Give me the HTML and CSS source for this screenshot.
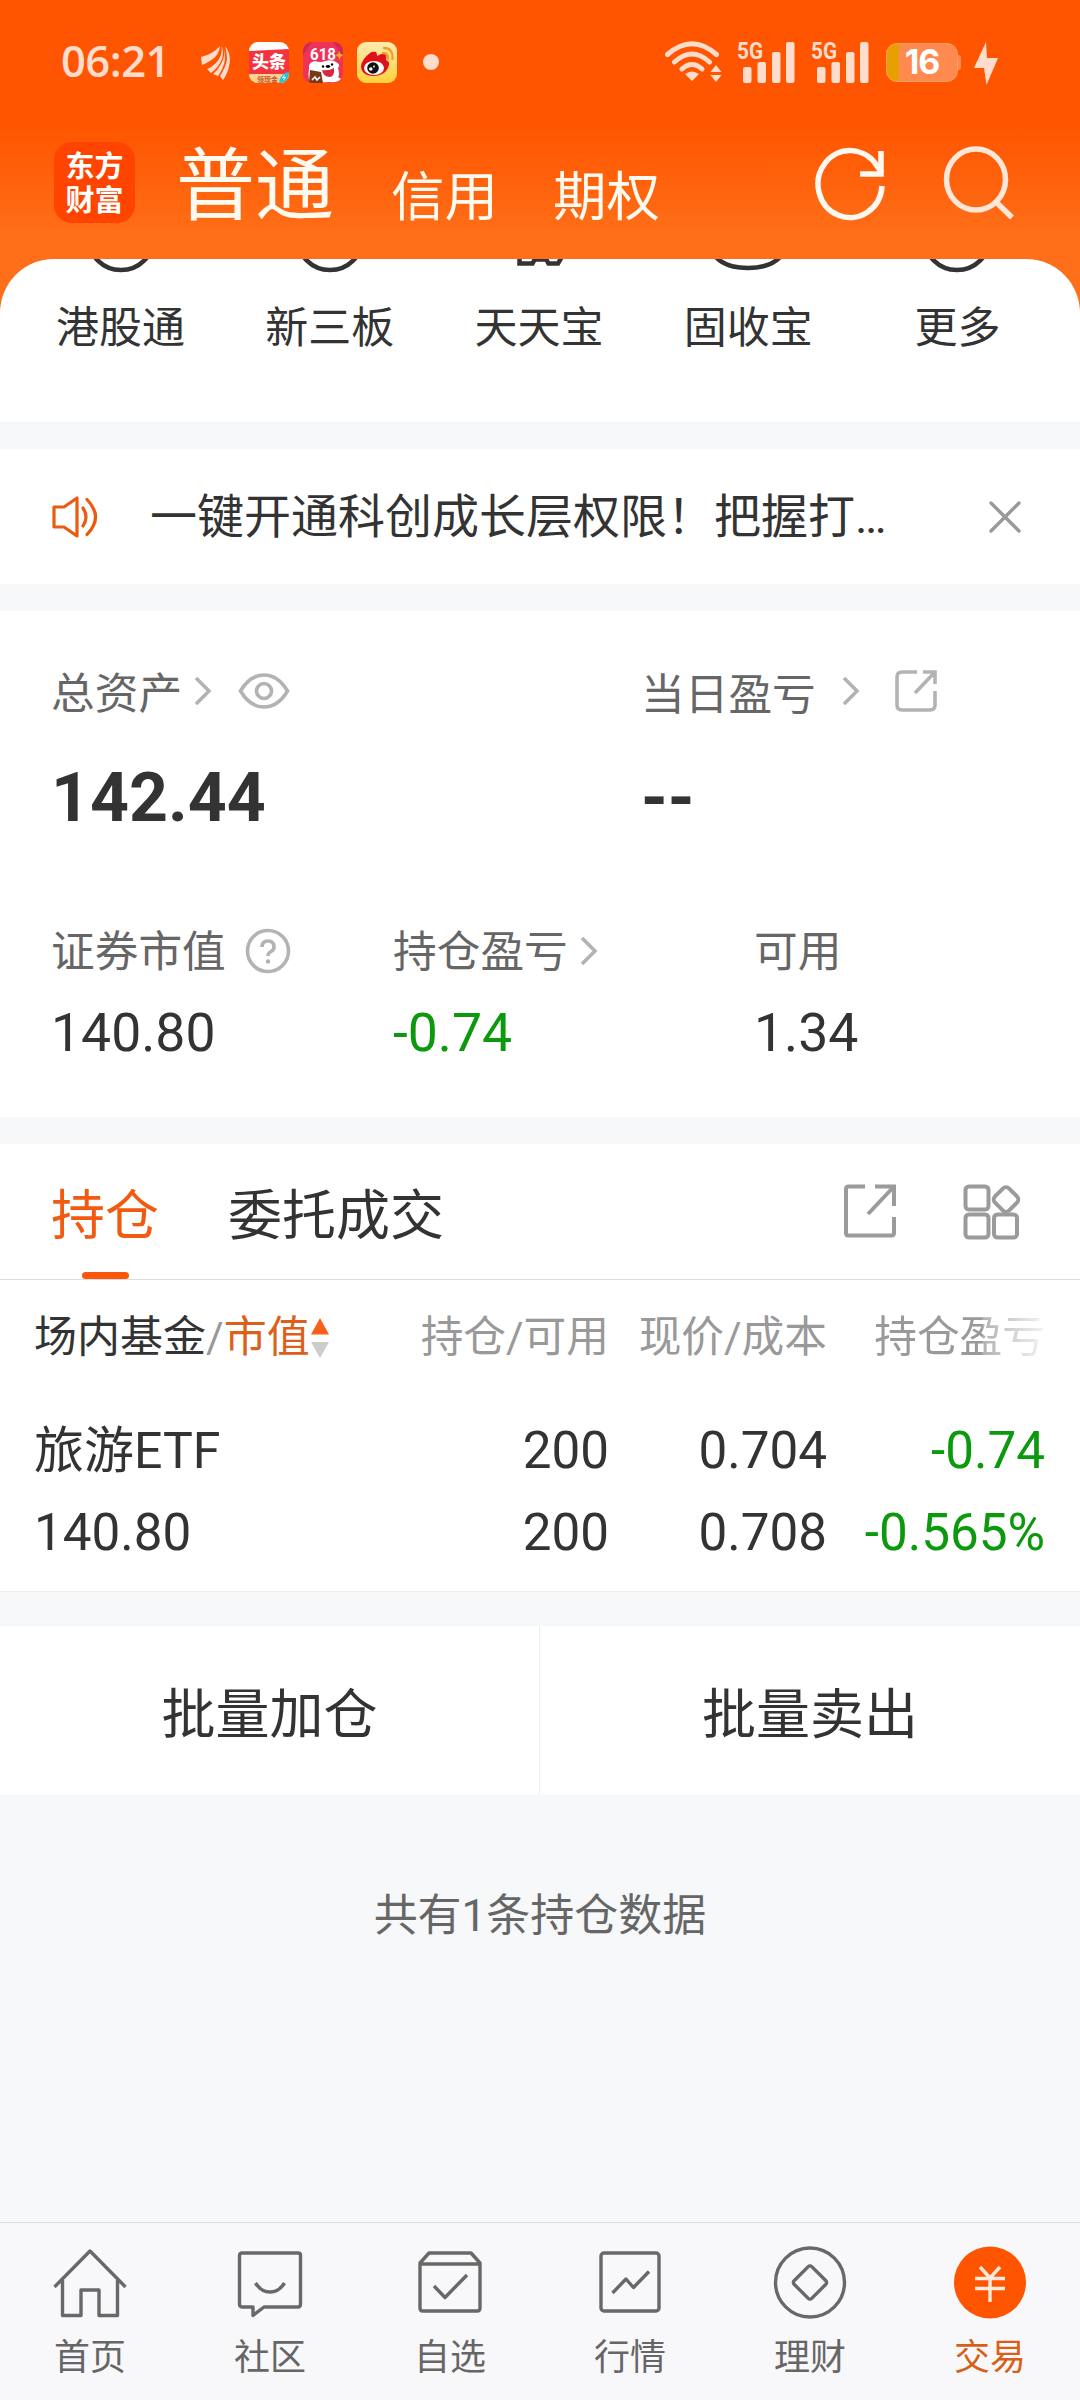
FILE: index.html
```html
<!DOCTYPE html>
<html lang="zh-CN">
<head>
<meta charset="utf-8">
<title>东方财富 交易</title>
<link rel="stylesheet" href="styles.css">
</head>
<body>
<header class="top">
  <div class="status">
    <div class="status-left">
      <span class="clock">06:21</span>
      <svg class="leaf" width="30" height="36" viewBox="0 0 30 36" fill="#ffdccb"><path d="M0 12Q12 9 19 1Q18 11 9 16Q4 19 1 20Z"/><path d="M20.500 1Q22 11 15 18Q11 22 6 24L10 28Q18 22 21 14Q23 7 20.500 1Z"/><path d="M22 1Q25 11 20 19Q17 25 12 29L17 31Q23 23 24 14Q24 7 22 1Z"/><path d="M24 1Q31 10 28 21Q27 28 22 35L19 31Q25 22 26 14Q26 7 24 1Z"/></svg>
      <svg class="app" width="40" height="41" viewBox="0 0 40 41"><defs><clipPath id="c1"><rect width="40" height="41" rx="9"/></clipPath></defs><g clip-path="url(#c1)"><rect width="40" height="41" fill="#fff"/><path d="M0 9L40 7V33H0Z" fill="#f5333f"/><rect y="32" width="40" height="9" fill="#ffd292"/><path d="M30 41Q31 31 40 30V41Z" fill="#22c4d6"/><path d="M36 32L33 36h2l-1 3 3-4h-2z" fill="#fff"/></g><text x="20" y="26" text-anchor="middle" class="t-news">头条</text><text x="18.500" y="39.500" text-anchor="middle" class="t-cash">领现金</text></svg>
      <svg class="app" width="40" height="41" viewBox="0 0 40 41"><defs><clipPath id="c2"><rect width="40" height="41" rx="9"/></clipPath></defs><g clip-path="url(#c2)"><rect width="40" height="41" fill="#ee3358"/><path d="M0 13L9 0H0ZM30 0h10v14z" fill="#cf2859"/><path d="M36 9l1.500 3 3 1-3 2-1 3-1-3-3-2 3-1z" fill="#ffb21e"/><path d="M6 27Q5 20 12 19Q18 21 22 19Q29 17 33 20Q38 22 35 26Q37 33 35 35L38 37Q34 41 27 40L9 41Q4 38 6 27Z" fill="#fff"/><path d="M19 28Q26 29 31 26Q32 35 26 35Q20 34 19 28Z" fill="#d8283f"/><circle cx="20" cy="24.500" r="1.200"/><circle cx="29" cy="22.500" r="1.200"/><ellipse cx="25" cy="24.500" rx="2.200" ry="1.400"/><path d="M7 28L18 30L20 41H6Z" fill="#7a3a18"/><path d="M9 38l3-3 2 3 3-3" stroke="#fff" stroke-width="1.500" fill="none"/></g><text x="20" y="18" text-anchor="middle" textLength="26" lengthAdjust="spacingAndGlyphs" class="t-sale">618</text></svg>
      <svg class="app" width="40" height="41" viewBox="0 0 40 41"><defs><linearGradient id="wb" x1="0" y1="0" x2="0" y2="1"><stop offset="0" stop-color="#ffeab0"/><stop offset="1" stop-color="#ffd23c"/></linearGradient></defs><rect width="40" height="41" rx="9" fill="url(#wb)"/><path d="M17 10Q20 9 20 14Q27 10 29 13Q30 15 29 18Q34 20 31 26Q27 34 16 34Q4 33 4 24Q5 17 13 11Q16 9 17 10Z" fill="#e0101a"/><ellipse cx="17" cy="26" rx="10" ry="7" fill="#fff"/><circle cx="16" cy="26" r="5.800" fill="#111"/><circle cx="13.800" cy="27" r="1.800" fill="#fff"/><circle cx="17" cy="24.500" r=".9" fill="#fff"/><path d="M27 6Q36 6 35.500 17M26 11Q32 11 31 17" stroke="#efa024" stroke-width="2.300" fill="none" stroke-linecap="round"/></svg>
      <span class="more-dot"></span>
    </div>
    <div class="status-right">
      <svg class="wifi" width="58" height="42" viewBox="0 0 58 42" fill="none" stroke="#ffdccb" stroke-width="5" stroke-linecap="round"><path d="M3.500 13.500Q28 -8 52.500 13.500M10.500 21Q28 5 45.500 21M18 28Q28 19 38 28"/><path d="M21 33Q28 28 35 33L28 40Z" fill="#ffdccb" stroke="none"/><path d="M46.500 31L52 24L57.500 31ZM46.500 34H57.500L52 41Z" fill="#ffdccb" stroke="none"/></svg>
      <svg class="signal" width="58" height="42" viewBox="0 0 58 42" fill="#ffdccb"><text x="0" y="18" class="t-5g" textLength="26" lengthAdjust="spacingAndGlyphs">5G</text><rect x="6" y="26" width="8.500" height="16" rx="2"/><rect x="20.500" y="21" width="8.500" height="21" rx="2"/><rect x="35" y="11" width="8.500" height="31" rx="2"/><rect x="49" y="1" width="8.500" height="41" rx="2"/></svg>
      <svg class="signal second" width="58" height="42" viewBox="0 0 58 42" fill="#ffdccb"><text x="0" y="18" class="t-5g" textLength="26" lengthAdjust="spacingAndGlyphs">5G</text><rect x="6" y="26" width="8.500" height="16" rx="2"/><rect x="20.500" y="21" width="8.500" height="21" rx="2"/><rect x="35" y="11" width="8.500" height="31" rx="2"/><rect x="49" y="1" width="8.500" height="41" rx="2"/></svg>
      <div class="battery"><span>16</span></div><i class="nub"></i>
      <svg class="bolt" width="24" height="43" viewBox="0 0 24 43" fill="#ffdccb"><path d="M12 0L0 26H10L12.500 43L24 16H13Z"/></svg>
    </div>
  </div>
  <div class="titlebar">
    <div class="logo"><span>东方</span><span>财富</span></div>
    <nav class="modes"><b>普通</b><span>信用</span><span>期权</span></nav>
    <svg class="refresh" width="74" height="76" viewBox="0 0 74 76" fill="none" stroke="#fff8f0" stroke-width="5.500"><path d="M68 41A32 33.500 0 1 1 63 21L68 28"/><path d="M67 6V29H46"/></svg>
    <svg class="search" width="72" height="76" viewBox="0 0 72 76" fill="none" stroke="#ffe6d6" stroke-width="5.500"><ellipse cx="34" cy="34.500" rx="29.500" ry="30.500"/><path d="M54 57L70 72.500"/></svg>
  </div>
</header>
<section class="shortcuts">
  <div class="shortcut"><svg width="64" height="14" viewBox="0 0 64 14"><circle cx="32" cy="-22" r="33"/></svg><span>港股通</span></div>
  <div class="shortcut"><svg width="64" height="14" viewBox="0 0 64 14"><circle cx="32" cy="-22" r="33"/></svg><span>新三板</span></div>
  <div class="shortcut"><svg width="64" height="14" viewBox="0 0 64 14"><path d="M12.500 -2V4.500H25.500L29 -2M38 -2L41.500 4.500H51L56 -4M28 0.500H40"/></svg><span>天天宝</span></div>
  <div class="shortcut"><svg width="72" height="14" viewBox="0 0 72 14"><path d="M3 -3Q13 9 36 9Q59 9 69 -3"/></svg><span>固收宝</span></div>
  <div class="shortcut"><svg width="64" height="14" viewBox="0 0 64 14"><circle cx="32" cy="-22" r="33"/></svg><span>更多</span></div>
</section>
<section class="notice">
  <svg class="speaker" width="48" height="42" viewBox="0 0 48 42" fill="none" stroke="#ea5b12" stroke-width="3.200" stroke-linejoin="round" stroke-linecap="round"><path d="M2 11H12L25 2V40L12 31H2Z"/><path d="M31 12Q37 21 31 30M35 3.500Q52 21 35 38.500"/></svg>
  <span class="notice-text">一键开通科创成长层权限！把握打…</span>
  <svg class="close" width="32" height="32" viewBox="0 0 32 32" stroke="#999" stroke-width="3.400" stroke-linecap="round"><path d="M2 2L30 30M30 2L2 30"/></svg>
</section>
<section class="assets">
  <div class="totals">
    <div>
      <div class="label"><span>总资产</span><svg class="chev" width="18" height="28" viewBox="0 0 18 28"><path d="M2 1L15 14L2 27"/></svg><svg class="eye" width="52" height="36" viewBox="0 0 52 36"><path d="M2.500 18Q12 2 26 2T49.500 18Q40 34 26 34T2.500 18Z"/><circle cx="26" cy="18" r="7.500"/></svg></div>
      <div class="big">142.44</div>
    </div>
    <div>
      <div class="label day"><span>当日盈亏</span><svg class="chev" width="18" height="28" viewBox="0 0 18 28"><path d="M2 1L15 14L2 27"/></svg><svg class="share-s" width="44" height="44" viewBox="0 0 44 44"><path d="M23 3H8Q3 3 3 8V36Q3 41 8 41H36Q41 41 41 36V22M29 3H41V15M41 3L21 24"/></svg></div>
      <div class="big">--</div>
    </div>
  </div>
  <div class="details">
    <div><div class="label">证券市值<svg class="help" width="46" height="46" viewBox="0 0 46 46"><circle cx="23" cy="23" r="20.500"/><path d="M17 19Q17 13 23 13T29 19Q29 22 26 23.500Q23 25 23 28"/><circle class="dot" cx="23" cy="33.500" r="2.200"/></svg></div><div class="value">140.80</div></div>
    <div><div class="label">持仓盈亏<svg class="chev" width="18" height="28" viewBox="0 0 18 28"><path d="M2 1L15 14L2 27"/></svg></div><div class="value green">-0.74</div></div>
    <div><div class="label">可用</div><div class="value">1.34</div></div>
  </div>
</section>
<section class="positions">
  <div class="tabs">
    <span class="tab active">持仓</span><span class="tab">委托成交</span>
    <svg class="share" width="52" height="54" viewBox="0 0 52 54"><path d="M21 2.500H4.500Q2 2.500 2 5V49Q2 51.500 4.500 51.500H47.500Q50 51.500 50 49V33M31 2.500H50V22M50 2.500L24 30"/></svg>
    <svg class="grid" width="58" height="56" viewBox="0 0 58 56"><rect x="2.500" y="2.500" width="23" height="23" rx="3.500"/><rect x="2.500" y="30.500" width="23" height="23" rx="3.500"/><rect x="31" y="30.500" width="23" height="23" rx="3.500"/><rect x="33" y="5.500" width="20" height="20" rx="4.500" transform="rotate(45 43 15.500)"/></svg>
  </div>
  <div class="row head">
    <div class="name">场内基金<em>/</em><strong>市值</strong><svg class="sort" width="18" height="40" viewBox="0 0 18 40"><path d="M9 0L18 16.500H0Z" fill="#f9611a"/><path d="M0 24H18L9 40Z" fill="#ccc"/></svg></div>
    <div>持仓/可用</div><div>现价/成本</div><div class="fade">持仓盈亏</div>
  </div>
  <div class="row"><div class="name fund">旅游ETF</div><div>200</div><div>0.704</div><div class="green">-0.74</div></div>
  <div class="row"><div class="name">140.80</div><div>200</div><div>0.708</div><div class="green">-0.565%</div></div>
</section>
<section class="actions"><div>批量加仓</div><div>批量卖出</div></section>
<p class="summary">共有1条持仓数据</p>
<nav class="tabbar">
  <div><svg width="74" height="74" viewBox="0 0 74 74"><path d="M1.500 41L37 5L72.500 41M9.500 34V69.500H28V44H46V69.500H64.500V34"/></svg><span>首页</span></div>
  <div><svg width="74" height="74" viewBox="0 0 74 74"><path d="M9 7H65Q67.500 7 67.500 9.500V58Q67.500 61 65 61H31L20 69.500V61H9Q6.500 61 6.500 58V9.500Q6.500 7 9 7Z"/><path d="M22.500 37Q28 46 37 46T51.500 37"/></svg><span>社区</span></div>
  <div><svg width="74" height="74" viewBox="0 0 74 74"><path d="M7 17L16 7H58L67 17V62Q67 65 64 65H10Q7 65 7 62ZM7 18H67"/><path d="M21 40L32 51.500L54 29"/></svg><span>自选</span></div>
  <div><svg width="74" height="74" viewBox="0 0 74 74"><rect x="8" y="7" width="58" height="58" rx="3"/><path d="M19.500 47L33 33L40.500 41.500L56 25.500"/></svg><span>行情</span></div>
  <div><svg width="74" height="74" viewBox="0 0 74 74"><circle cx="37" cy="36.500" r="34.500"/><rect x="24.500" y="24" width="25" height="25" rx="2.500" transform="rotate(45 37 36.500)"/></svg><span>理财</span></div>
  <div class="on"><svg width="74" height="74" viewBox="0 0 74 74"><circle cx="37" cy="36.500" r="36"/><path d="M27 21L37 32L47 21M22 32.500H52M22 42.500H52M37 32V56"/></svg><span>交易</span></div>
</nav>
</body>
</html>
```
FILE: styles.css
```css
* { box-sizing: border-box; }
body {
  margin: 0;
  width: 1080px;
  height: 2400px;
  display: flex;
  flex-direction: column;
  background: #f7f8fa;
  color: #333;
  font-family: Roboto, "Noto Sans CJK SC", sans-serif;
  overflow: hidden;
}
svg { display: block; flex: none; }
.top {
  height: 313px;
  flex: none;
  background: linear-gradient(#ff5500 0, #ff5500 125px, #ff6e18 235px, #ff6e18 100%);
}
.status { height: 124px; display: flex; align-items: center; justify-content: space-between; padding: 0 82px 0 61px; }
.status-left, .status-right { display: flex; align-items: center; }
.clock { width: 140px; font: 600 43.500px/60px "Open Sans", sans-serif; color: #ffdccb; white-space: nowrap; letter-spacing: -.5px; padding-bottom: 2px; }
.leaf { margin-right: 18px; margin-top: 1px; }
.app { margin-right: 14px; }
.t-news { font: 900 17px "Noto Sans CJK SC", sans-serif; fill: #fff; }
.t-cash { font: 700 7px "Noto Sans CJK SC", sans-serif; fill: #c4542a; }
.t-sale { font: 700 17px Roboto, sans-serif; fill: #fff; }
.signal { overflow: visible; }
.t-5g { font: 700 24px Roboto, sans-serif; }
.more-dot { width: 16px; height: 16px; border-radius: 50%; background: #ffdccb; margin-left: 12px; }
.wifi { margin-right: 15px; }
.second { margin: 0 17px 0 16px; }
.battery {
  width: 72px; height: 39px; border-radius: 11px; border: 1px solid #ff9d68;
  background: linear-gradient(90deg, #e6a000 12px, #ff8a50 12px);
  display: flex; justify-content: center; align-items: center;
  font: 700 34px/38px Inter, sans-serif; letter-spacing: -1px; color: #fff;
}
.nub { width: 3px; height: 15px; border-radius: 0 3px 3px 0; background: #ff8a50; }
.bolt { margin-left: 13px; margin-top: 2px; }
.titlebar { height: 117px; display: flex; align-items: center; padding: 0 66px 0 54px; }
.logo {
  width: 81px; height: 81px; border-radius: 18px; background: #ff4400; color: #fff;
  display: flex; flex-direction: column; align-items: center; justify-content: center;
  font: 700 29px/34px "Noto Sans CJK SC", sans-serif; padding-bottom: 4px;
}
.modes { display: flex; flex: 1; padding-left: 41px; color: #fffaf0; line-height: 90px; }
.modes b { font-size: 79px; font-weight: 400; margin-right: 57px; padding-top: 20px; }
.modes span { font-size: 53.500px; margin-right: 55px; padding-top: 31px; }
.refresh { margin-right: 54px; margin-top: 0; }
.shortcuts {
  height: 163px; flex: none; margin-top: -54px; padding: 0 18px 0 16px;
  background: #fff; border-radius: 54px 54px 0 0;
  display: grid; grid-template-columns: repeat(5, 1fr);
}
.shortcut { display: flex; flex-direction: column; align-items: center; font-size: 43px; line-height: 60px; }
.shortcut svg { fill: none; stroke: #333; stroke-width: 4.5; margin-bottom: 25px; }
.notice { height: 135px; flex: none; margin-top: 27px; background: #fff; display: flex; align-items: center; padding: 0 59px 0 52px; }
.notice-text { flex: 1; margin-left: 50px; font-size: 47px; line-height: 60px; }
.assets { height: 506px; flex: none; margin-top: 27px; background: #fff; padding: 50px 52px 0 51px; }
.totals { display: grid; grid-template-columns: 590px 1fr; }
.label { display: flex; align-items: center; font-size: 43.700px; line-height: 60px; height: 60px; color: #666; }
.totals .label span { padding-top: 5px; }
.day span { position: relative; top: 1px; }
.label svg { fill: none; stroke: #b3b3b3; stroke-width: 3.6; }
.chev { margin-left: 12px; }
.eye { margin-left: 26px; }
.day .chev { margin-left: 26px; }
.share-s { margin-left: 34px; }
.help { margin-left: 19px; }
.label .help .dot { fill: #b3b3b3; stroke: none; }
.big { font-size: 68px; font-weight: 700; line-height: 80px; margin-top: 37px; }
.details { display: grid; grid-template-columns: 342px 361px 1fr; margin-top: 82px; }
.details .label { padding-top: 3px; }
.details .label svg { margin-top: -2px; }
.value { font-size: 53.500px; line-height: 60px; margin-top: 23px; }
.green { color: #0d990d; }
.positions { height: 448px; flex: none; margin-top: 27px; background: #fff; border-bottom: 1px solid #eee; }
.tabs { height: 136px; display: flex; align-items: center; padding: 0 59px 0 51px; border-bottom: 1px solid #ddd; }
.tab { font-size: 54px; line-height: 145px; height: 135px; margin-right: 69px; }
.tab.active { color: #f25a10; display: flex; flex-direction: column; align-items: center; }
.tab.active::after { content: ""; width: 47px; height: 7px; border-radius: 4px; background: #fb560a; margin-top: -17px; flex: none; }
.share, .grid { fill: none; stroke: #9b9b9b; stroke-width: 4; }
.share { margin-left: auto; margin-top: -1px; }
.grid { margin-left: 67px; margin-top: 0; }
.row { display: grid; grid-template-columns: 409px 200px 218px 218px; height: 82px; line-height: 82px; font-size: 51.200px; text-align: right; }
.row .name { text-align: left; padding-left: 34px; display: flex; align-items: center; }
.row .fund { font-size: 50px; }
.row.head { font-size: 42.700px; color: #999; height: 130px; line-height: 115px; }
.head .name { color: #333; height: 115px; font-size: 43px; }
.head em { font-style: normal; color: #999; }
.head strong { font-weight: 400; color: #dc5f1a; }
.sort { margin-left: 1px; }
.fade { mask-image: linear-gradient(90deg, #000 155px, rgba(0, 0, 0, .75) 156px, rgba(0, 0, 0, .1) 218px); }
.actions { height: 169px; flex: none; margin-top: 34px; background: #fff; display: grid; grid-template: 169px / 540px 540px; text-align: center; font-size: 54px; line-height: 180px; }
.actions div:first-child { border-right: 1px solid #eee; }
.summary { margin: 88px 0 0; font-size: 44px; line-height: 66px; text-align: center; color: #666; }
.tabbar { height: 178px; flex: none; margin-top: auto; border-top: 1px solid #ddd; background: #f8f8fa; display: grid; grid-template-columns: repeat(6, 1fr); padding-top: 23px; }
.tabbar div { display: flex; flex-direction: column; align-items: center; font-size: 36px; line-height: 50px; color: #666; }
.tabbar svg { fill: none; stroke: #686868; stroke-width: 3.4; stroke-linejoin: round; margin-bottom: 13px; }
.tabbar .on { color: #d95f18; }
.tabbar .on circle { fill: #ff5500; stroke: none; }
.tabbar .on svg { stroke: #ffeadc; }
```
